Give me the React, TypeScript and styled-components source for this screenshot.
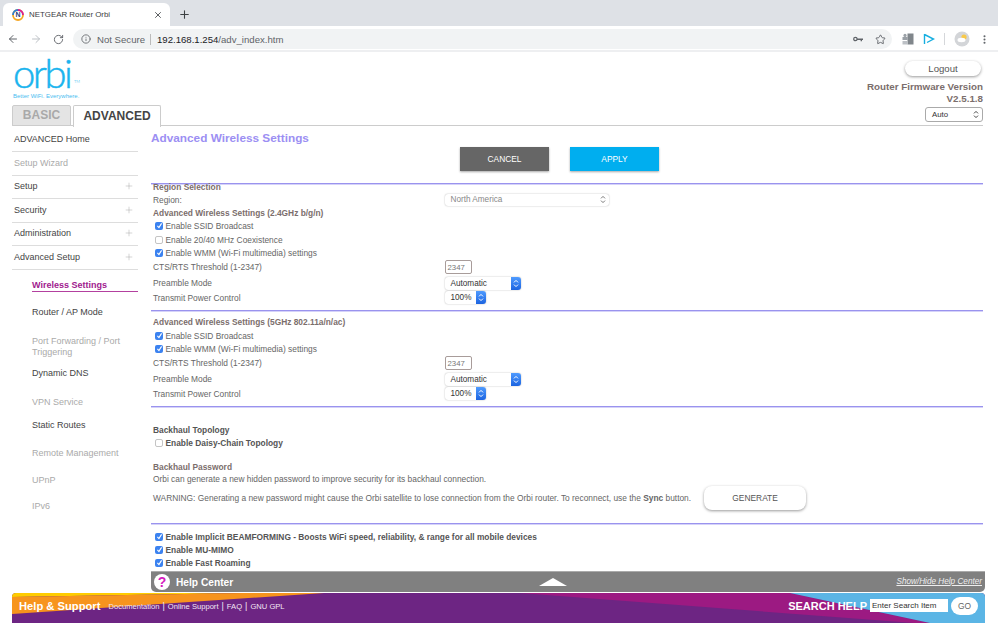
import { FC, ReactNode } from "react";
import styled, { createGlobalStyle } from "styled-components";
import { ArrowLeft, ArrowRight, Info, MoreVertical, Plus, RotateCw, Star, X } from "lucide-react";

const Global = createGlobalStyle`
html, body { margin: 0; padding: 0; background: #fff; }
body { font-family: "Liberation Sans", Arial, sans-serif; color: #555; }
* { box-sizing: border-box; }
`;

const Page = styled.div`
width: 998px;
height: 623px;
display: flex;
flex-direction: column;
overflow: hidden;
`;

/* browser chrome */
const TabStrip = styled.div`
height: 26px;
background: #dee1e6;
display: flex;
align-items: flex-end;
padding-left: 3px;
flex: none;
`;

const Tab = styled.div`
width: 167px;
height: 23px;
background: #fff;
border-radius: 6px 6px 0 0;
display: flex;
align-items: center;
padding: 0 7px 0 9px;
font-size: 7.9px;
color: #3c4043;
& > span { margin-left: 5px; flex: 1; }
`;

const NewTab = styled.div`
width: 30px;
height: 23px;
margin-left: -1px;
display: flex;
align-items: center;
justify-content: center;
color: #3c4043;
`;

const Toolbar = styled.div`
height: 24px;
background: #fff;
display: flex;
align-items: center;
flex: none;
padding: 2px 8px 0 7px;
`;

const NavIcons = styled.div`
display: flex;
gap: 11px;
align-items: center;
width: 66px;
flex: none;
`;

const Omnibox = styled.div`
width: 819px;
height: 20px;
flex: none;
background: #f1f3f4;
border-radius: 10px;
display: flex;
align-items: center;
padding: 0 6px 0 8px;
font-size: 9.6px;
color: #5f6368;
`;

const Secure = styled.span`
margin-left: 6px;
padding-right: 5px;
border-right: 1px solid #bbb;
line-height: 11px;
`;

const Url = styled.span`
margin-left: 6px;
flex: 1;
color: #5f6368;
& > b { font-weight: 400; color: #202124; }
`;

const OmniIcons = styled.div`
display: flex;
gap: 12px;
align-items: center;
`;

const Extensions = styled.div`
display: flex;
align-items: center;
margin-left: 10px;
gap: 9px;
flex: none;
`;

const ChromeDivider = styled.div`
height: 2px;
background: #eeeff1;
flex: none;
`;

/* page header */
const Header = styled.div`
height: 74px;
margin: 0 15px 0 12px;
display: flex;
justify-content: space-between;
border-bottom: 1px solid #ccc;
flex: none;
`;

const Brand = styled.div`
display: flex;
flex-direction: column;
`;

const Logo = styled.div`
height: 33px;
margin-top: 5px;
padding-left: 1px;
display: flex;
color: #1ab4ee;
font-family: Lato, sans-serif;
font-weight: 300;
font-size: 40px;
line-height: 33px;
letter-spacing: -2.5px;
-webkit-text-stroke: 0.5px #1ab4ee;
& > sup { font-size: 4px; line-height: 49px; margin-left: 3.5px; letter-spacing: 0; -webkit-text-stroke: 0; }
`;

const Tagline = styled.div`
font-size: 6px;
line-height: 7px;
margin: 3px 0 0 1px;
color: #49bdf0;
`;

const Tabs = styled.div`
display: flex;
gap: 2px;
margin-top: 5px;
align-items: flex-end;
`;

const NavTab = styled.div<{ $active?: boolean }>`
height: ${(p) => (p.$active ? 22 : 21)}px;
width: ${(p) => (p.$active ? 88 : 59)}px;
margin-bottom: ${(p) => (p.$active ? -1 : 0)}px;
padding-bottom: 1px;
border: 1px solid #ccc;
border-bottom: ${(p) => (p.$active ? "none" : "1px solid #ccc")};
border-radius: 2px 2px 0 0;
background: ${(p) => (p.$active ? "#fff" : "#e4e4e4")};
color: ${(p) => (p.$active ? "#444" : "#a9a9a9")};
font-size: 12px;
font-weight: 700;
display: flex;
align-items: center;
justify-content: center;
`;

const HeaderRight = styled.div`
display: flex;
flex-direction: column;
align-items: flex-end;
margin-top: 9px;
`;

const Logout = styled.div`
width: 76px;
height: 15px;
margin-right: 2px;
border-radius: 8px;
background: #fff;
box-shadow: 0 1px 3px rgba(0, 0, 0, 0.4);
font-size: 9.6px;
color: #555;
display: flex;
align-items: center;
justify-content: center;
`;

const Firmware = styled.div`
margin-top: 5px;
text-align: right;
font-size: 9.8px;
line-height: 11.5px;
font-weight: 700;
color: #7b6e6c;
`;

const SelectBox = styled.div<{ $w: number; $h?: number; $muted?: boolean }>`
width: ${(p) => p.$w}px;
height: ${(p) => p.$h ?? 12}px;
background: #fff;
border-radius: 3px;
box-shadow: 0 0 1.5px rgba(0, 0, 0, 0.35);
display: flex;
align-items: center;
justify-content: space-between;
padding-left: 6px;
font-size: 8.2px;
color: ${(p) => (p.$muted ? "#888" : "#333")};
`;

const AutoSelect = styled(SelectBox)`
margin-top: 3px;
height: 15px;
border: 1px solid #aaa;
box-shadow: none;
padding: 0 3px 0 6px;
font-size: 7.8px;
`;

const BlueCap = styled.span`
width: 10px;
align-self: stretch;
background: linear-gradient(#4f9bff, #1c64e0);
border-radius: 0 3px 3px 0;
display: flex;
align-items: center;
justify-content: center;
`;

const GreyCap = styled.span`
margin-right: 3px;
display: flex;
`;

/* body */
const Body = styled.div`
flex: 1;
display: flex;
margin: 0 13px 0 12px;
min-height: 0;
`;

const Sidebar = styled.div`
width: 126px;
margin-right: 12px;
padding-top: 2.5px;
flex: none;
font-size: 9px;
color: #444;
`;

const MenuRow = styled.div<{ $muted?: boolean }>`
height: 23.5px;
padding: 0 4px 1px 2px;
display: flex;
align-items: center;
justify-content: space-between;
border-bottom: 1px solid #ddd;
color: ${(p) => (p.$muted ? "#aaa" : "#444")};
`;

const SubMenu = styled.div`
padding-left: 20px;
`;

const SubItem = styled.div<{ $h: number; $top?: number; $muted?: boolean; $active?: boolean }>`
height: ${(p) => p.$h}px;
margin-top: ${(p) => p.$top ?? 0}px;
line-height: 11.5px;
font-weight: ${(p) => (p.$active ? 700 : 400)};
color: ${(p) => (p.$active ? "#a0208e" : p.$muted ? "#aaa" : "#444")};
border-bottom: ${(p) => (p.$active ? "1px solid #b3409f" : "none")};
`;

const Content = styled.div`
flex: 1;
display: flex;
flex-direction: column;
min-width: 0;
min-height: 0;
`;

const Scroll = styled.div`
flex: 1;
min-height: 0;
overflow: hidden;
padding: 0 2px 0 3px;
font-size: 8.37px;
color: #666;
`;

const Title = styled.h1`
margin: 5px 0 2px -2px;
height: 14px;
font-size: 11.8px;
line-height: 14px;
font-weight: 700;
color: #9c8ff3;
`;

const ButtonBar = styled.div`
display: flex;
gap: 21px;
padding-left: 307px;
height: 36px;
`;

const ActionBtn = styled.div<{ $bg: string }>`
width: 89px;
height: 24px;
background: ${(p) => p.$bg};
color: #fff;
font-size: 8.4px;
display: flex;
align-items: center;
justify-content: center;
box-shadow: 0 1px 2px rgba(0, 0, 0, 0.35);
`;

const Rule = styled.div<{ $before?: number; $after?: number }>`
height: 1px;
background: #9a93ee;
box-shadow: 0 1px 0 #d5d2f9;
margin-left: -2px;
margin-top: ${(p) => p.$before ?? 0}px;
margin-bottom: ${(p) => p.$after ?? 0}px;
`;

const Row = styled.div<{ $h: number; $top?: number; $bold?: boolean; $dark?: boolean }>`
height: ${(p) => p.$h}px;
margin-top: ${(p) => p.$top ?? 0}px;
display: flex;
align-items: center;
font-weight: ${(p) => (p.$bold ? 700 : 400)};
color: ${(p) => (p.$dark ? "#555" : "#666")};
white-space: nowrap;
`;

const Heading = styled(Row)`
font-weight: 700;
color: #7b6e6c;
`;

const Label = styled.span`
width: 291.5px;
flex: none;
`;

const Box = styled.span<{ $on?: boolean }>`
width: 8px;
height: 8px;
margin: 0 2.5px 0 2px;
flex: none;
border-radius: 2px;
background: ${(p) => (p.$on ? "#3b82f0" : "#fff")};
border: ${(p) => (p.$on ? "none" : "1px solid #c4c4c4")};
display: flex;
align-items: center;
justify-content: center;
`;

const NumInput = styled.div`
width: 27px;
height: 14px;
border: 1px solid #a89c9a;
border-radius: 2px;
font-size: 7.8px;
color: #777;
display: flex;
align-items: center;
padding-left: 2px;
`;

const Generate = styled.div`
width: 102px;
height: 24px;
margin-left: 13px;
border-radius: 8px;
background: #fff;
box-shadow: 0 1px 3px rgba(0, 0, 0, 0.4);
font-size: 8.4px;
color: #555;
display: flex;
align-items: center;
justify-content: center;
`;

const HelpBar = styled.div`
height: 21px;
margin-bottom: 1px;
margin-left: 1px;
flex: none;
background: #808080;
border-top: 1px solid #aaa;
border-radius: 0 0 5px 5px;
display: grid;
grid-template-columns: 1fr 1fr 1fr;
align-items: center;
padding: 0 3px;
color: #fff;
`;

const HelpTitle = styled.div`
display: flex;
align-items: center;
gap: 6px;
font-size: 10.2px;
font-weight: 700;
`;

const HelpMark = styled.span`
width: 16px;
height: 16px;
border-radius: 50%;
background: #fff;
color: #d61cc0;
font-size: 14px;
font-weight: 700;
display: flex;
align-items: center;
justify-content: center;
`;

const Caret = styled.div`
justify-self: center;
width: 0;
height: 0;
margin-left: -30px;
border-left: 14px solid transparent;
border-right: 14px solid transparent;
border-bottom: 8px solid #fff;
`;

const ShowHide = styled.div`
justify-self: end;
font-size: 8.2px;
font-style: italic;
text-decoration: underline;
color: #eee;
margin-bottom: 2px;
`;

const Footer = styled.div`
height: 30px;
margin: 0 13px 0 12px;
flex: none;
position: relative;
border-radius: 4px 4px 0 0;
overflow: hidden;
background: #6d2583;
display: flex;
align-items: center;
justify-content: space-between;
padding: 0 7px 5px 7px;
color: #fff;
`;

const FooterArt = styled.svg`
position: absolute;
left: 0;
top: 0;
width: 100%;
height: 100%;
`;

const FooterGroup = styled.div`
position: relative;
display: flex;
align-items: center;
`;

const Support = styled.span`
font-size: 11.2px;
font-weight: 700;
margin-right: 8px;
`;

const FootLink = styled.span`
font-size: 7.6px;
padding-top: 1px;
color: #f3e6f5;
& + &::before { content: "|"; margin: 0 3px; font-size: 9px; }
`;

const SearchLabel = styled.span`
font-size: 11px;
font-weight: 700;
margin-right: 3px;
`;

const SearchInput = styled.div`
width: 78px;
height: 13px;
background: #fff;
color: #333;
font-size: 8px;
line-height: 13px;
padding-left: 2px;
`;

const Go = styled.div`
width: 27px;
height: 18px;
margin-left: 3px;
border-radius: 9px;
background: #fff;
color: #666;
font-size: 8.4px;
display: flex;
align-items: center;
justify-content: center;
`;

const Check = () => (
  <svg width="7" height="7" viewBox="0 0 10 10">
    <path d="M2 5.5 L4.2 8 L8 2" fill="none" stroke="#fff" strokeWidth="1.6" />
  </svg>
);

const Chevrons: FC<{ color?: string }> = ({ color = "#fff" }) => (
  <svg width="6" height="9" viewBox="0 0 6 9">
    <path d="M1 3.4 L3 1.4 L5 3.4 M1 5.6 L3 7.6 L5 5.6" fill="none" stroke={color} strokeWidth="1" />
  </svg>
);

const CheckRow: FC<{ h: number; top?: number; on?: boolean; bold?: boolean; children: ReactNode }> = ({ h, top, on, bold, children }) => (
  <Row $h={h} $top={top} $bold={bold} $dark={bold}>
    <Box $on={on}>{on && <Check />}</Box>
    {children}
  </Row>
);

const BlueSelect: FC<{ w: number; children: ReactNode }> = ({ w, children }) => (
  <SelectBox $w={w} $h={13}>
    {children}
    <BlueCap><Chevrons /></BlueCap>
  </SelectBox>
);

const menu = ["Setup", "Security", "Administration", "Advanced Setup"];

const App: FC = () => (
  <>
    <Global />
    <Page>
      <TabStrip>
        <Tab>
          <svg width="12" height="12" viewBox="0 0 12 12">
            <circle cx="6" cy="6" r="5" fill="#fff" stroke="#f5a623" strokeWidth="1.8" />
            <path d="M6 1 A5 5 0 0 1 11 6" fill="none" stroke="#d61c9a" strokeWidth="1.8" />
            <path d="M1 6 A5 5 0 0 1 6 1" fill="none" stroke="#2a7fd6" strokeWidth="1.8" />
            <text x="6" y="8.4" fontSize="7" fontWeight="700" textAnchor="middle" fill="#2a3a7a">N</text>
          </svg>
          <span>NETGEAR Router Orbi</span>
          <X size={10} strokeWidth={2} />
        </Tab>
        <NewTab><Plus size={13} strokeWidth={2} /></NewTab>
      </TabStrip>
      <Toolbar>
        <NavIcons>
          <ArrowLeft size={12} color="#5f6368" />
          <ArrowRight size={12} color="#bdc1c6" />
          <RotateCw size={11} color="#5f6368" />
        </NavIcons>
        <Omnibox>
          <Info size={10} color="#5f6368" />
          <Secure>Not Secure</Secure>
          <Url><b>192.168.1.254</b>/adv_index.htm</Url>
          <OmniIcons>
            <svg width="10" height="6" viewBox="0 0 10 6">
              <circle cx="2.4" cy="3" r="1.7" fill="none" stroke="#5f6368" strokeWidth="1.2" />
              <path d="M4 2.4 H10 V4 H9 V5.2 H7.6 V4 H4 Z" fill="#5f6368" />
            </svg>
            <Star size={11} color="#5f6368" />
          </OmniIcons>
        </Omnibox>
        <Extensions>
          <svg width="12" height="12" viewBox="0 0 12 12">
            <rect x="0.5" y="4" width="5" height="3" fill="#9aa0a6" />
            <circle cx="3" cy="2.4" r="1.6" fill="#9aa0a6" />
            <rect x="5.5" y="0.5" width="6" height="11" fill="#80868b" />
            <rect x="0.5" y="8" width="5" height="3.5" fill="#bdc1c6" />
          </svg>
          <svg width="12" height="12" viewBox="0 0 12 12">
            <path d="M1.5 1 V11 M1.5 1.5 L10.5 6 L4 9.5" fill="none" stroke="#16aee0" strokeWidth="1.4" />
          </svg>
          <svg width="1" height="12"><rect width="1" height="12" fill="#d5d7da" /></svg>
          <svg width="16" height="16" viewBox="0 0 16 16">
            <circle cx="8" cy="8" r="7.5" fill="#d3d5d8" />
            <circle cx="10" cy="6" r="2.6" fill="#f8c94a" />
            <ellipse cx="7.5" cy="9" rx="4" ry="2.2" fill="#fff" />
          </svg>
          <MoreVertical size={11} color="#5f6368" strokeWidth={2.5} />
        </Extensions>
      </Toolbar>
      <ChromeDivider />
      <Header>
        <Brand>
          <Logo>orbi<sup>TM</sup></Logo>
          <Tagline>Better WiFi. Everywhere.</Tagline>
          <Tabs>
            <NavTab>BASIC</NavTab>
            <NavTab $active>ADVANCED</NavTab>
          </Tabs>
        </Brand>
        <HeaderRight>
          <Logout>Logout</Logout>
          <Firmware>Router Firmware Version<br />V2.5.1.8</Firmware>
          <AutoSelect $w={58}>Auto<Chevrons color="#444" /></AutoSelect>
        </HeaderRight>
      </Header>
      <Body>
        <Sidebar>
          <MenuRow>ADVANCED Home</MenuRow>
          <MenuRow $muted>Setup Wizard</MenuRow>
          {menu.map((m) => (
            <MenuRow key={m}>{m}<Plus size={10} strokeWidth={1} color="#999" /></MenuRow>
          ))}
          <SubMenu>
            <SubItem $h={12} $top={10} $active>Wireless Settings</SubItem>
            <SubItem $h={29} $top={15}>Router / AP Mode</SubItem>
            <SubItem $h={32} $muted>Port Forwarding / Port Triggering</SubItem>
            <SubItem $h={29}>Dynamic DNS</SubItem>
            <SubItem $h={23} $muted>VPN Service</SubItem>
            <SubItem $h={28}>Static Routes</SubItem>
            <SubItem $h={27} $muted>Remote Management</SubItem>
            <SubItem $h={26} $muted>UPnP</SubItem>
            <SubItem $h={14} $muted>IPv6</SubItem>
          </SubMenu>
        </Sidebar>
        <Content>
          <Scroll>
            <Title>Advanced Wireless Settings</Title>
            <ButtonBar>
              <ActionBtn $bg="#666">CANCEL</ActionBtn>
              <ActionBtn $bg="#00aeef">APPLY</ActionBtn>
            </ButtonBar>
            <Rule />
            <Heading $h={6}>Region Selection</Heading>
            <Row $h={19}>
              <Label>Region:</Label>
              <SelectBox $w={164} $muted>North America<GreyCap><Chevrons color="#777" /></GreyCap></SelectBox>
            </Row>
            <Heading $h={8}>Advanced Wireless Settings (2.4GHz b/g/n)</Heading>
            <CheckRow h={15} top={1} on>Enable SSID Broadcast</CheckRow>
            <CheckRow h={13}>Enable 20/40 MHz Coexistence</CheckRow>
            <CheckRow h={13} on>Enable WMM (Wi-Fi multimedia) settings</CheckRow>
            <Row $h={16}><Label>CTS/RTS Threshold (1-2347)</Label><NumInput>2347</NumInput></Row>
            <Row $h={16}><Label>Preamble Mode</Label><BlueSelect w={76}>Automatic</BlueSelect></Row>
            <Row $h={13}><Label>Transmit Power Control</Label><BlueSelect w={41}>100%</BlueSelect></Row>
            <Rule $before={6} $after={3} />
            <Heading $h={15}>Advanced Wireless Settings (5GHz 802.11a/n/ac)</Heading>
            <CheckRow h={13} on>Enable SSID Broadcast</CheckRow>
            <CheckRow h={13} on>Enable WMM (Wi-Fi multimedia) settings</CheckRow>
            <Row $h={16}><Label>CTS/RTS Threshold (1-2347)</Label><NumInput>2347</NumInput></Row>
            <Row $h={16}><Label>Preamble Mode</Label><BlueSelect w={76}>Automatic</BlueSelect></Row>
            <Row $h={13}><Label>Transmit Power Control</Label><BlueSelect w={41}>100%</BlueSelect></Row>
            <Rule $before={6} $after={16} />
            <Row $h={13} $bold $dark>Backhaul Topology</Row>
            <CheckRow h={13} bold>Enable Daisy-Chain Topology</CheckRow>
            <Heading $h={13} $top={11}>Backhaul Password</Heading>
            <Row $h={11}>Orbi can generate a new hidden password to improve security for its backhaul connection.</Row>
            <Row $h={24} $top={2}>
              <span>WARNING: Generating a new password might cause the Orbi satellite to lose connection from the Orbi router. To reconnect, use the <b>Sync</b> button.</span>
              <Generate>GENERATE</Generate>
            </Row>
            <Rule $before={13} $after={6} />
            <CheckRow h={13} on bold>Enable Implicit BEAMFORMING - Boosts WiFi speed, reliability, &amp; range for all mobile devices</CheckRow>
            <CheckRow h={13} on bold>Enable MU-MIMO</CheckRow>
            <CheckRow h={13} on bold>Enable Fast Roaming</CheckRow>
          </Scroll>
          <HelpBar>
            <HelpTitle><HelpMark>?</HelpMark>Help Center</HelpTitle>
            <Caret />
            <ShowHide>Show/Hide Help Center</ShowHide>
          </HelpBar>
        </Content>
      </Body>
      <Footer>
        <FooterArt viewBox="0 0 973 30" preserveAspectRatio="none">
          <polygon points="0,0 230,0 0,4" fill="#ffcc00" />
          <polygon points="0,4 230,0 312,0 0,21" fill="#f7941d" />
          <polygon points="508,0 778,0 918,30 902,30" fill="#9c1a82" />
          <polygon points="778,0 973,0 973,30 918,30" fill="#5bb5e5" />
        </FooterArt>
        <FooterGroup>
          <Support>Help &amp; Support</Support>
          <FootLink>Documentation</FootLink>
          <FootLink>Online Support</FootLink>
          <FootLink>FAQ</FootLink>
          <FootLink>GNU GPL</FootLink>
        </FooterGroup>
        <FooterGroup>
          <SearchLabel>SEARCH HELP</SearchLabel>
          <SearchInput>Enter Search Item</SearchInput>
          <Go>GO</Go>
        </FooterGroup>
      </Footer>
    </Page>
  </>
);

export default App;
